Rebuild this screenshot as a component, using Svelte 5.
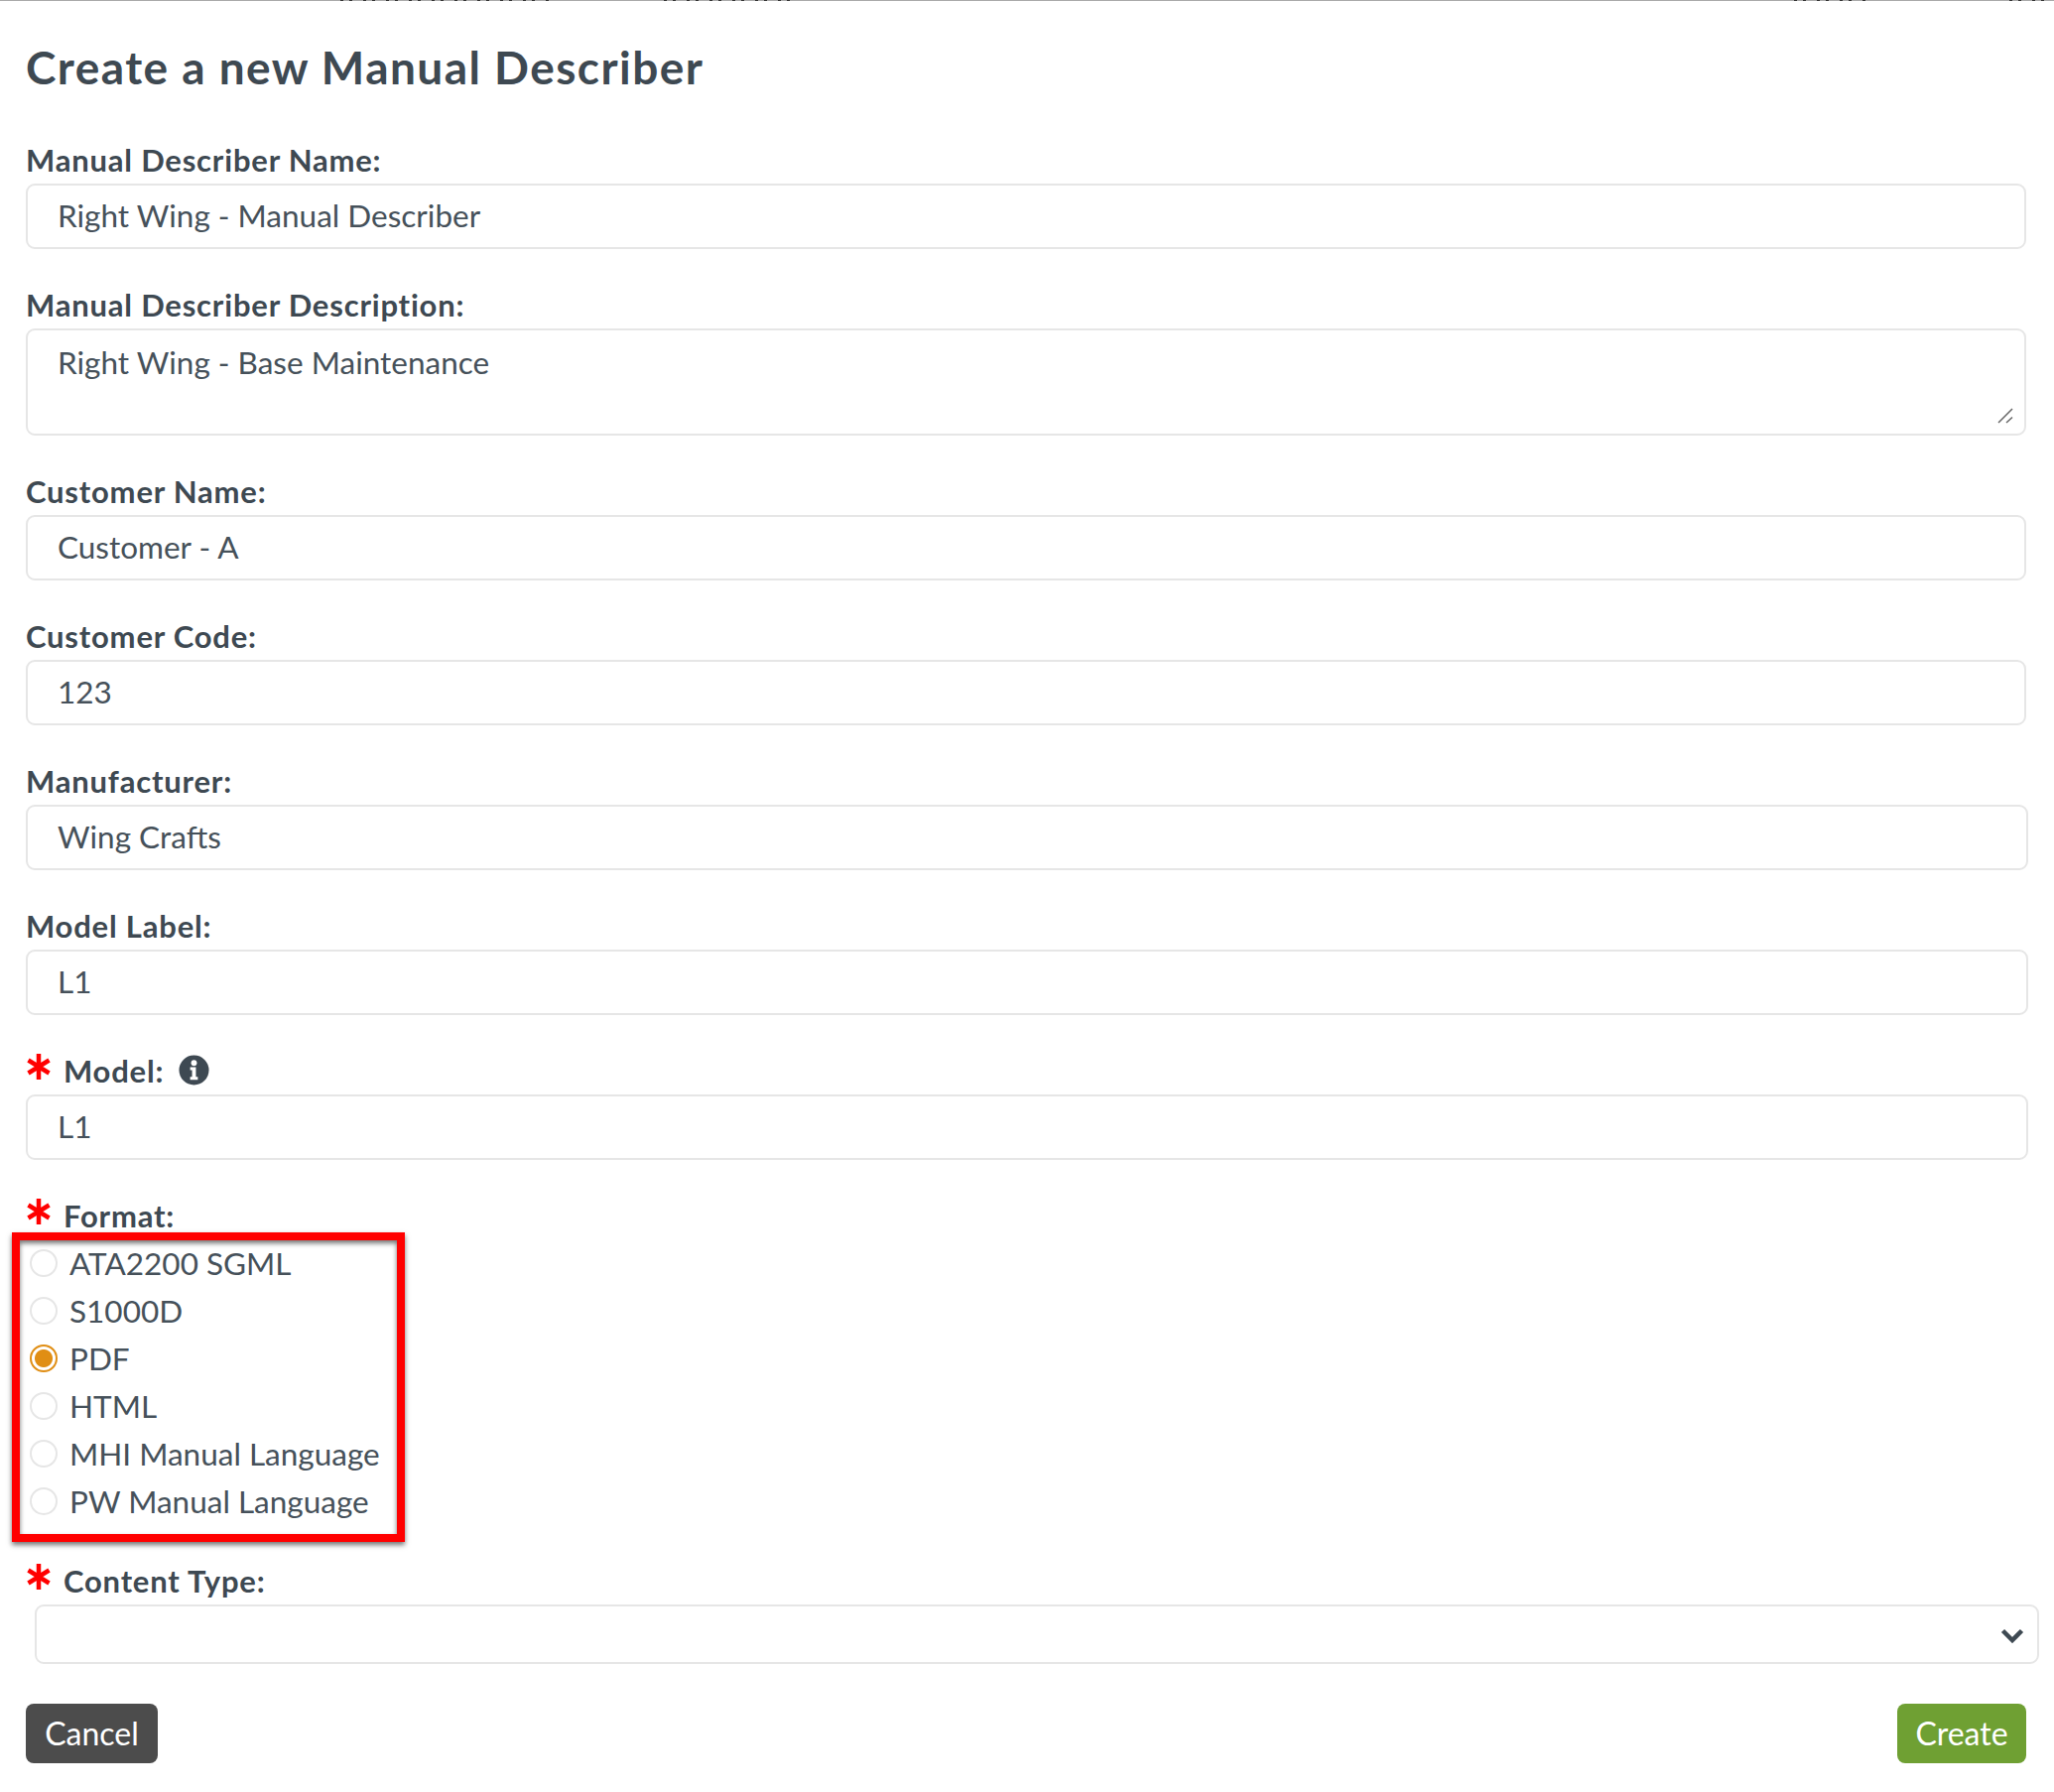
<script>
  const formats = ['ATA2200 SGML', 'S1000D', 'PDF', 'HTML', 'MHI Manual Language', 'PW Manual Language'];
  let format = $state('PDF');

  // plain text fields above the required ones
  const fields = [
    { label: 'Manual Describer Name:', value: 'Right Wing - Manual Describer' },
    { label: 'Manual Describer Description:', value: 'Right Wing - Base Maintenance', area: true },
    { label: 'Customer Name:', value: 'Customer - A' },
    { label: 'Customer Code:', value: '123' },
    { label: 'Manufacturer:', value: 'Wing Crafts', wide: true },
    { label: 'Model Label:', value: 'L1', wide: true }
  ];
</script>

{#snippet star()}
  <svg class="star" viewBox="0 0 24 26" aria-hidden="true">
    <path d="M12 0v26M1.500 6.500l21 13M22.500 6.500l-21 13" />
  </svg>
{/snippet}

<div class="page">
  <div class="clipped">
    <i style="width:210px;margin-left:343px"></i>
    <i style="width:138px;margin-left:116px"></i>
    <i style="width:72px;margin-left:1001px"></i>
    <i style="width:45px;margin-left:145px"></i>
  </div>

  <h1>Create a new Manual Describer</h1>

  {#each fields as field}
    <div class="field">
      <label for={field.label}>{field.label}</label>
      {#if field.area}
        <div class="area-wrap">
          <textarea id={field.label} class="control" value={field.value}></textarea>
          <svg class="grip" viewBox="0 0 16 16" aria-hidden="true">
            <path d="M1 15L15 1M9 15l6-5.500" />
          </svg>
        </div>
      {:else}
        <input id={field.label} class="control" class:wide={field.wide} value={field.value} />
      {/if}
    </div>
  {/each}

  <div class="field">
    <label class="required" for="model">
      {@render star()}
      <span>Model:</span>
      <svg class="info" viewBox="0 0 32 32" aria-hidden="true">
        <circle cx="16" cy="16" r="15.500" />
        <circle cx="16" cy="8.500" r="3" fill="#fff" />
        <path d="M12 13h6v10h2v3h-8v-3h2v-7h-2z" fill="#fff" />
      </svg>
    </label>
    <input id="model" class="control wide" value="L1" />
  </div>

  <div class="required format-label">
    {@render star()}
    <span>Format:</span>
  </div>
  <div class="format-box">
    {#each formats as item}
      <label class="radio">
        <input type="radio" name="format" value={item} bind:group={format} />
        <span>{item}</span>
      </label>
    {/each}
  </div>

  <label class="required content-label" for="content-type">
    {@render star()}
    <span>Content Type:</span>
  </label>
  <div class="select-wrap">
    <select id="content-type"></select>
    <svg class="chevron" viewBox="0 0 24 16" aria-hidden="true">
      <path d="M2.500 3.500L12 13l9.500-9.500" />
    </svg>
  </div>

  <div class="actions">
    <button type="button" class="cancel">Cancel</button>
    <button type="button" class="create">Create</button>
  </div>
</div>

<style>
  :global(body) {
    background: #fff;
  }

  .page {
    height: 1806px;
    box-sizing: border-box;
    padding: 0 28px 0 26px;
    font-family: Lato, "Open Sans", sans-serif;
    color: #3e4952;
    overflow: hidden;
  }

  /* bottom edge of the page behind the dialog */
  .clipped {
    display: flex;
    height: 1px;
    margin: 0 -28px 0 -26px;
    background: #aaa;
  }

  .clipped i {
    display: block;
    flex: none;
    height: 1px;
    background: repeating-linear-gradient(90deg, #333 0 3px, #aaa 3px 9px, #333 9px 12px, #aaa 12px 23px);
  }

  h1 {
    margin: 43px 0 0;
    font-size: 46px;
    line-height: 48px;
    font-weight: 700;
    letter-spacing: 1.45px;
  }

  .field {
    margin-top: 38px;
  }

  h1 + .field {
    margin-top: 51px;
  }

  .field label,
  .required {
    display: block;
    font-size: 31px;
    line-height: 36px;
    font-weight: 700;
    letter-spacing: 0.8px;
  }

  .field label {
    margin-bottom: 6px;
  }

  .control {
    display: block;
    box-sizing: border-box;
    width: 2016px;
    height: 66px;
    padding: 0 30px 2px;
    border: 2px solid #e6e6e6;
    border-radius: 9px;
    background: #fff;
    font: 400 31.5px Lato, "Open Sans", sans-serif;
    color: #46515a;
    outline: none;
  }

  .control.wide {
    width: 2018px;
  }

  .area-wrap {
    position: relative;
  }

  textarea.control {
    height: 108px;
    padding: 13px 30px;
    line-height: 38px;
    resize: none;
  }

  .grip {
    position: absolute;
    right: 13px;
    bottom: 12px;
    width: 16px;
    height: 16px;
    fill: none;
    stroke: #666;
    stroke-width: 1.5;
  }

  .field label.required,
  .required {
    display: flex;
    align-items: center;
  }

  .star {
    flex: none;
    width: 24px;
    height: 26px;
    margin: -8px 13px 0 1px;
    fill: none;
    stroke: #f00;
    stroke-width: 4.500;
  }

  .info {
    width: 31px;
    height: 31px;
    margin: -2px 0 0 15px;
    fill: #3e4952;
  }

  .format-label {
    margin-top: 38px;
  }

  .format-box {
    box-sizing: border-box;
    width: 396px;
    height: 312px;
    margin: -1px 0 0 -14px;
    padding: 0 0 0 10px;
    border: 8px solid #f00;
    box-shadow: 0 3px 5px rgba(0, 0, 0, 0.55), inset 0 3px 5px rgba(0, 0, 0, 0.55);
  }

  .radio {
    display: flex;
    align-items: center;
    gap: 12px;
    height: 48px;
    font-size: 31.5px;
    color: #46515a;
  }

  .radio:first-child {
    margin-top: -1px;
  }

  .radio input {
    appearance: none;
    flex: none;
    box-sizing: border-box;
    width: 28px;
    height: 28px;
    margin: 0;
    border: 2px solid #e6e6e6;
    border-radius: 50%;
    background: #fff;
  }

  .radio input:checked {
    border-color: #e08e14;
    background: radial-gradient(circle, #e08e14 0 8.500px, #fff 9.500px);
  }

  .content-label {
    margin-top: 21px;
    margin-bottom: 6px;
  }

  .select-wrap {
    position: relative;
    width: 2020px;
    margin-left: 9px;
  }

  select {
    appearance: none;
    display: block;
    box-sizing: border-box;
    width: 100%;
    height: 60px;
    border: 2px solid #e6e6e6;
    border-radius: 9px;
    background: #fff;
    outline: none;
  }

  .chevron {
    position: absolute;
    top: 23px;
    right: 15px;
    width: 24px;
    height: 16px;
    fill: none;
    stroke: #3e4952;
    stroke-width: 4.500;
  }

  .actions {
    display: flex;
    justify-content: space-between;
    margin-top: 40px;
  }

  button {
    height: 60px;
    padding: 0 18px 2px;
    border: none;
    border-radius: 8px;
    color: #fff;
    font: 400 32px Lato, "Open Sans", sans-serif;
  }

  .cancel {
    width: 133px;
    background: #4c4c4c;
  }

  .create {
    width: 130px;
    background: #6fa033;
  }
</style>
